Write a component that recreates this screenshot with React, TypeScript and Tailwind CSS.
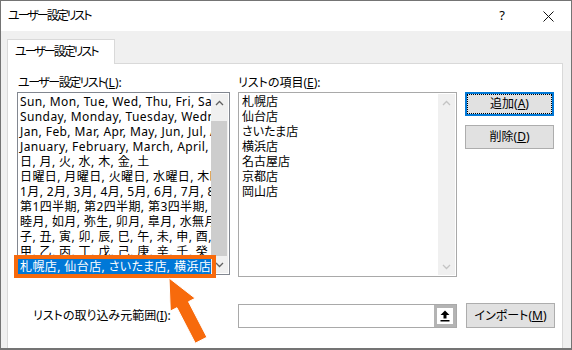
import React from 'react';

const leftItems = [
  'Sun, Mon, Tue, Wed, Thu, Fri, Sat',
  'Sunday, Monday, Tuesday, Wednesday, Thursday, Friday, Saturday',
  'Jan, Feb, Mar, Apr, May, Jun, Jul, Aug, Sep, Oct, Nov, Dec',
  'January, February, March, April, May, June, July, August, September, October, November, December',
  '日, 月, 火, 水, 木, 金, 土',
  '日曜日, 月曜日, 火曜日, 水曜日, 木曜日, 金曜日, 土曜日',
  '1月, 2月, 3月, 4月, 5月, 6月, 7月, 8月, 9月, 10月, 11月, 12月',
  '第1四半期, 第2四半期, 第3四半期, 第4四半期',
  '睦月, 如月, 弥生, 卯月, 皐月, 水無月, 文月, 葉月, 長月, 神無月, 霜月, 師走',
  '子, 丑, 寅, 卯, 辰, 巳, 午, 未, 申, 酉, 戌, 亥',
  '甲, 乙, 丙, 丁, 戊, 己, 庚, 辛, 壬, 癸',
];

const selectedItem = '札幌店, 仙台店, さいたま店, 横浜店, 名古屋店, 京都店, 岡山店';
const entries = ['札幌店', '仙台店', 'さいたま店', '横浜店', '名古屋店', '京都店', '岡山店'];

const Chevron = ({ up, color }: { up: boolean; color: string }) => (
  <svg width="9" height="6" viewBox="0 0 9 6" aria-hidden="true">
    <path
      d={up ? 'M1 5L4.5 1.5L8 5' : 'M1 1L4.5 4.5L8 1'}
      fill="none"
      stroke={color}
      strokeWidth="1.3"
    />
  </svg>
);

// vertical scrollbar inside a list box
const ScrollBar = ({ disabled }: { disabled?: boolean }) => {
  const arrow = disabled ? '#c4c4c4' : '#606060';
  return (
    <div className="w-[17px] my-[1px] mr-[1px] flex flex-col bg-[#f0f0f0]">
      <div className="h-[17px] flex items-center justify-center">
        <Chevron up color={arrow} />
      </div>
      <div className="flex-1 flex flex-col pt-[10px]">
        {!disabled && <div className="flex-1 bg-[#cdcdcd] mr-[1px]" />}
      </div>
      <div className="h-[17px] flex items-center justify-center">
        <Chevron up={false} color={arrow} />
      </div>
    </div>
  );
};

const Btn = ({ label, m, focused, h = 'h-[24px]' }: { label: string; m: string; focused?: boolean; h?: string }) => (
  <div
    className={`${h} w-[89px] bg-[#e1e1e1] flex items-center justify-center ${
      focused ? 'border-2 border-[#0078d7]' : 'border border-[#adadad]'
    }`}
  >
    <div
      className={`flex items-center justify-center ${
        focused ? 'w-full h-full border border-dotted border-black' : ''
      }`}
    >
      {label}(<span className="underline">{m}</span>)
    </div>
  </div>
);

export default function App() {
  return (
    <div className="relative w-[572px] h-[350px] overflow-hidden border border-b-2 border-[#747474] bg-[#f0f0f0] flex flex-col text-[12px] text-black font-['Noto_Sans','Noto_Sans_CJK_JP',sans-serif] [font-feature-settings:'palt']">
      {/* title bar */}
      <div className="h-[30px] bg-white flex items-center shrink-0">
        <div className="pl-[7px] flex-1 tracking-[-2px]">ユーザー設定リスト</div>
        <div className="w-[46px] h-full flex items-center justify-center text-[13px]">?</div>
        <div className="w-[46px] h-full flex items-center justify-center">
          <svg width="11" height="11" viewBox="0 0 11 11" aria-hidden="true">
            <path d="M0.5 0.5L10.5 10.5M10.5 0.5L0.5 10.5" stroke="#111" strokeWidth="1" />
          </svg>
        </div>
      </div>

      <div className="flex-1 flex flex-col pt-[8px] pl-[6px] pr-[8px]">
        {/* tab */}
        <div className="relative z-10 -mb-[1px] w-[108px] h-[25px] bg-white border border-b-0 border-[#d9d9d9] flex items-center pl-[7px] whitespace-nowrap tracking-[-2px]">
          ユーザー設定リスト
        </div>

        {/* tab page */}
        <div className="flex-1 bg-white border border-b-0 border-[#d9d9d9] pt-[10px] pl-[9px]">
          <div className="grid grid-cols-[213px_219px_89px] gap-x-[8px]">
            {/* left column */}
            <div>
              <div className="h-[18px] leading-[18px] pl-[1px] whitespace-nowrap">
                <span className="tracking-[-1.5px]">ユーザー設定リスト</span>(<span className="underline">L</span>):
              </div>
              <div className="relative h-[183px] border border-[#828790] bg-white flex">
                <div className="flex-1 min-w-0 overflow-hidden pt-[1px] tracking-[0.4px]">
                  {leftItems.map((t) => (
                    <div key={t} className="h-[15px] leading-[15px] pl-[2px] whitespace-nowrap overflow-hidden">
                      {t}
                    </div>
                  ))}
                  <div className="h-[15px] leading-[15px] pl-[2px] whitespace-nowrap overflow-hidden bg-[#0078d7] text-white">
                    {selectedItem}
                  </div>
                </div>
                <ScrollBar />
                {/* annotation box */}
                <div className="absolute left-[-4px] top-[162px] w-[202px] h-[23px] border-4 border-[#f76a0c]" />
              </div>
            </div>

            {/* middle column */}
            <div>
              <div className="h-[18px] leading-[18px]">
                リストの項目(<span className="underline">E</span>):
              </div>
              <div className="h-[185px] border border-[#a9a9a9] bg-white flex">
                <div className="flex-1 pt-[1px] pl-[3px]">
                  {entries.map((t) => (
                    <div key={t} className="h-[15px] leading-[15px]">
                      {t}
                    </div>
                  ))}
                </div>
                <ScrollBar disabled />
              </div>
            </div>

            {/* buttons */}
            <div className="pt-[18px] flex flex-col gap-[9px]">
              <Btn label="追加" m="A" focused />
              <Btn label="削除" m="D" />
            </div>
          </div>

          {/* import row */}
          <div className="mt-[26px] grid grid-cols-[213px_219px_89px] gap-x-[8px] items-center">
            <div className="pl-[16px] whitespace-nowrap">
              リストの取り込み元範囲(<span className="underline">I</span>):
            </div>
            <div className="h-[24px] border border-[#a9a9a9] bg-white flex justify-end">
              <div className="w-[22px] h-full border-[3px] border-[#b4b4b4] bg-white flex items-center justify-center">
                <svg width="10" height="12" viewBox="0 0 10 12" aria-hidden="true">
                  <path d="M5 0.5L9.5 5H6.5V8.5H3.5V5H0.5Z" fill="#000" />
                  <rect x="0.5" y="10" width="9" height="1.5" fill="#000" />
                </svg>
              </div>
            </div>
            <div className="ml-[1px]">
              <Btn label="インポート" m="M" h="h-[25px]" />
            </div>
          </div>
        </div>
      </div>

      {/* annotation arrow */}
      <svg
        className="absolute left-[150px] top-[260px]"
        width="70"
        height="90"
        viewBox="0 0 70 90"
        aria-hidden="true"
      >
        <polygon
          points="18,17 44.1,37.3 37.5,40.7 55.9,76.2 44.3,82.2 25.9,46.7 19.3,50.1"
          fill="#f76a0c"
          stroke="#ffffff"
          strokeWidth="1"
          strokeLinejoin="miter"
        />
      </svg>
    </div>
  );
}
